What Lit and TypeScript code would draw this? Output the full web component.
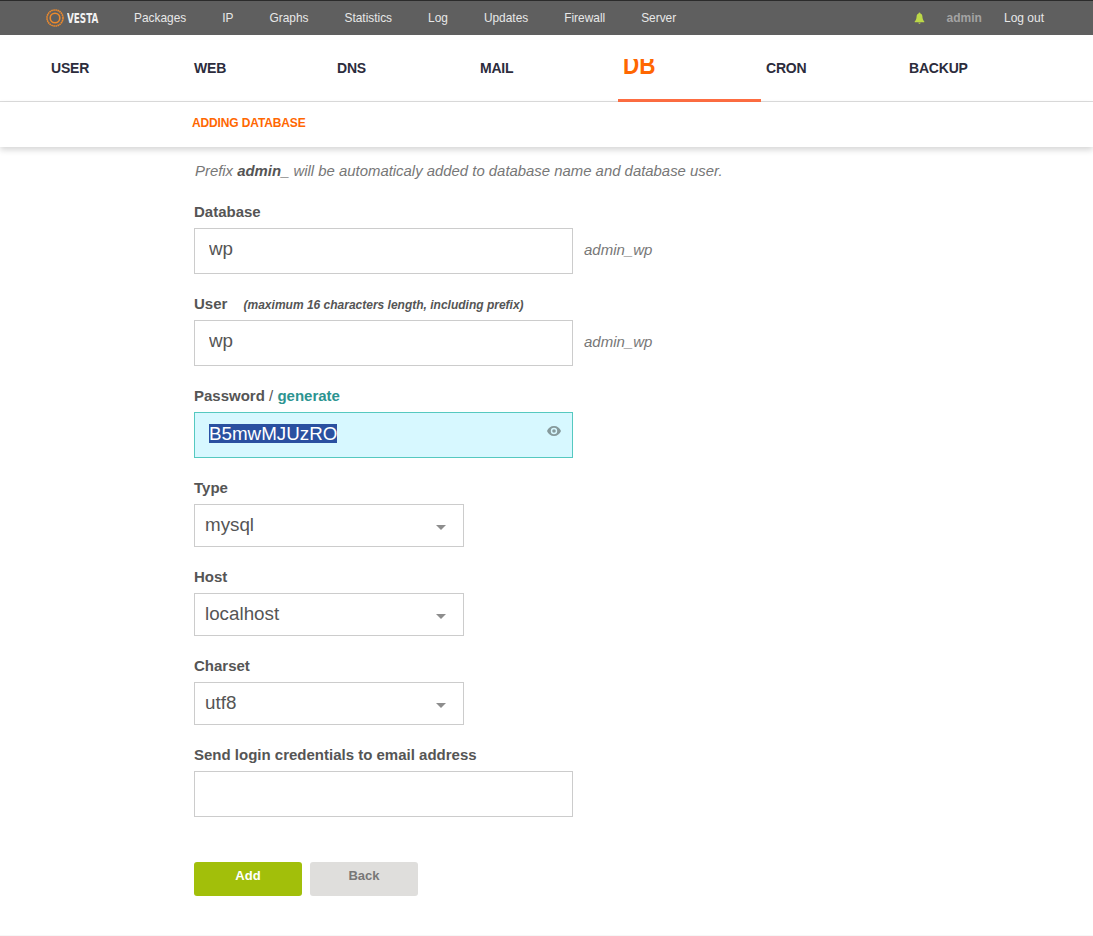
import { LitElement, html, css, svg } from "lit";
import { customElement } from "lit/decorators.js";

const topItems = ["Packages", "IP", "Graphs", "Statistics", "Log", "Updates", "Firewall", "Server"];
const tabs = ["USER", "WEB", "DNS", "MAIL", "DB", "CRON", "BACKUP"];

@customElement("app-root")
export class AppRoot extends LitElement {
  static styles = css`
    :host { display: block; box-sizing: border-box; width: 1093px; height: 936px; overflow: hidden; background: #fff; border-bottom: 1px solid #f7f7f7; font-family: "Liberation Sans", Arial, sans-serif; color: #555; }
    .top { height: 34px; border-top: 1px solid #2b2b2b; background: #5f5f5f; display: flex; align-items: center; font-size: 11.9px; color: #e8e8e8; padding-left: 46px; }
    .logo { display: flex; align-items: center; gap: 3px; width: 88px; }
    .logo svg { display: block; }
    .brand { font-family: "Liberation Sans Narrow", "DejaVu Sans Condensed", sans-serif; font-size: 14px; font-weight: 700; color: #f2f2f2; transform: scaleX(.7); transform-origin: left; }
    .items { display: flex; gap: 36px; }
    .right { margin-left: auto; display: flex; align-items: center; margin-right: 49px; font-size: 12px; }
    .admin { color: #a3a3a3; font-weight: 700; margin: 0 22px 0 22px; }
    .tabs { display: flex; height: 66px; padding-left: 46px; border-bottom: 1px solid #ddd; }
    .tab { width: 143px; box-sizing: border-box; padding: 25px 0 0 5px; font-size: 14px; letter-spacing: -.2px; line-height: 16px; font-weight: 700; color: #2c2c3c; }
    .tab.active { border-bottom: 3px solid #ff6e42; height: 67px; padding-top: 24px; font-size: 22.5px; letter-spacing: 0; color: #ff6701; }
    .clip { display: block; height: 15px; overflow: hidden; position: relative; }
    .clip span { position: absolute; left: 0; bottom: -4px; line-height: 23px; transform: scaleY(1.2); transform-origin: 0 19.3px; }
    .sub { height: 45px; padding: 0 0 4px 192px; box-sizing: border-box; display: flex; align-items: center; font-size: 12px; letter-spacing: -.13px; font-weight: 700; color: #ff6701; box-shadow: 0 3px 6px rgba(0,0,0,.16); position: relative; }
    form { padding: 16px 0 0 194px; display: block; }
    .note { font-size: 14.9px; font-style: italic; color: #777; line-height: 17px; margin: 0 0 24px 1px; }
    .note b { color: #555; }
    label { display: block; height: 16px; font-size: 15px; font-weight: 700; line-height: 16px; color: #555; }
    label small { font-size: 12px; font-style: italic; margin-left: 12px; }
    label a { color: #2c9491; }
    label i { font-style: normal; font-weight: 400; }
    .row { display: flex; align-items: center; margin-top: 8px; }
    .field { margin-bottom: 22px; }
    input { box-sizing: border-box; width: 379px; height: 46px; border: 1px solid #ccc; padding: 0 14px 4px; font: 18.8px "Liberation Sans", Arial, sans-serif; color: #555; background: #fff; border-radius: 0; outline: none; display: block; }
    .hint { font-size: 15px; font-style: italic; color: #777; margin: 0 0 4px 11px; }
    .pw { position: relative; box-sizing: border-box; width: 379px; height: 46px; border: 1px solid #55c9c0; background: #d7f8ff; padding: 11px 14px 0; font-size: 18.8px; line-height: 19px; color: #fff; }
    .pw span { background: #2a50a0; display: inline-block; }
    .eye { position: absolute; right: 10px; top: 12px; display: block; }
    .select { position: relative; box-sizing: border-box; width: 270px; height: 43px; border: 1px solid #ccc; padding: 8px 10px 0; font-size: 18.8px; line-height: 24px; color: #555; }
    .select::after { content: ""; position: absolute; right: 17px; top: 20px; border: 5px solid transparent; border-top: 5px solid #8d8d8d; border-bottom: 0; }
    .buttons { display: flex; gap: 8px; margin-top: 45px; }
    button { width: 108px; height: 34px; border: 0; border-radius: 3px; font: 700 13px/1 "Liberation Sans", Arial, sans-serif; padding: 0 0 7px; }
    .add { background: #a2bf0a; color: #fff; }
    .back { background: #dfdedc; color: #777; }
  `;

  render() {
    return html`
      <div class="top">
        <div class="logo">
          <svg width="18" height="18" viewBox="0 0 18 18">
            ${svg`<circle cx="9" cy="9" r="8" fill="none" stroke="#ee8a2c" stroke-width="1.6" stroke-dasharray="1.6 .5"/><circle cx="9" cy="9" r="4.8" fill="none" stroke="#ee8a2c" stroke-width="1.6"/>`}
          </svg>
          <span class="brand">VESTA</span>
        </div>
        <div class="items">${topItems.map((t) => html`<span>${t}</span>`)}</div>
        <div class="right">
          <svg width="11" height="12" viewBox="0 0 11 12">
            ${svg`<path d="M5.500 .5c.6 0 .9.4.9.9 1.300.4 1.900 1.500 2 3 .1 2.100.6 3.800 1.900 5.100v.7H.7v-.7c1.300-1.300 1.800-3 1.900-5.100.1-1.500.7-2.600 2-3 0-.5.3-.9.9-.9zM4.400 10.800h2.200c0 .5-.5 1-1.100 1s-1.100-.5-1.100-1z" fill="#bcd848"/>`}
          </svg>
          <span class="admin">admin</span>
          <span>Log out</span>
        </div>
      </div>
      <div class="tabs">
        ${tabs.map((t) => t === "DB"
          ? html`<div class="tab active"><div class="clip"><span>${t}</span></div></div>`
          : html`<div class="tab">${t}</div>`)}
      </div>
      <div class="sub">ADDING DATABASE</div>
      <form>
        <div class="note">Prefix <b>admin_</b> will be automaticaly added to database name and database user.</div>
        <div class="field">
          <label>Database</label>
          <div class="row"><input value="wp" /><span class="hint">admin_wp</span></div>
        </div>
        <div class="field">
          <label>User <small>(maximum 16 characters length, including prefix)</small></label>
          <div class="row"><input value="wp" /><span class="hint">admin_wp</span></div>
        </div>
        <div class="field">
          <label>Password <i>/</i> <a>generate</a></label>
          <div class="row">
            <div class="pw"><span>B5mwMJUzRO</span>
              <svg class="eye" width="16" height="12" viewBox="0 0 16 12">
                ${svg`<path fill-rule="evenodd" d="M8 1c3.300 0 5.900 2.100 7 5-1.100 2.900-3.700 5-7 5S2.100 8.900 1 6c1.100-2.900 3.700-5 7-5zm0 1.800a3.200 3.200 0 1 0 0 6.400 3.200 3.200 0 0 0 0-6.400zm0 1.400a1.800 1.800 0 1 1 0 3.600 1.800 1.800 0 0 1 0-3.600z" fill="#869a9c"/>`}
              </svg>
            </div>
          </div>
        </div>
        <div class="field"><label>Type</label><div class="row"><div class="select">mysql</div></div></div>
        <div class="field"><label>Host</label><div class="row"><div class="select">localhost</div></div></div>
        <div class="field"><label>Charset</label><div class="row"><div class="select">utf8</div></div></div>
        <div>
          <label>Send login credentials to email address</label>
          <div class="row"><input /></div>
        </div>
        <div class="buttons">
          <button type="button" class="add">Add</button>
          <button type="button" class="back">Back</button>
        </div>
      </form>
    `;
  }
}
